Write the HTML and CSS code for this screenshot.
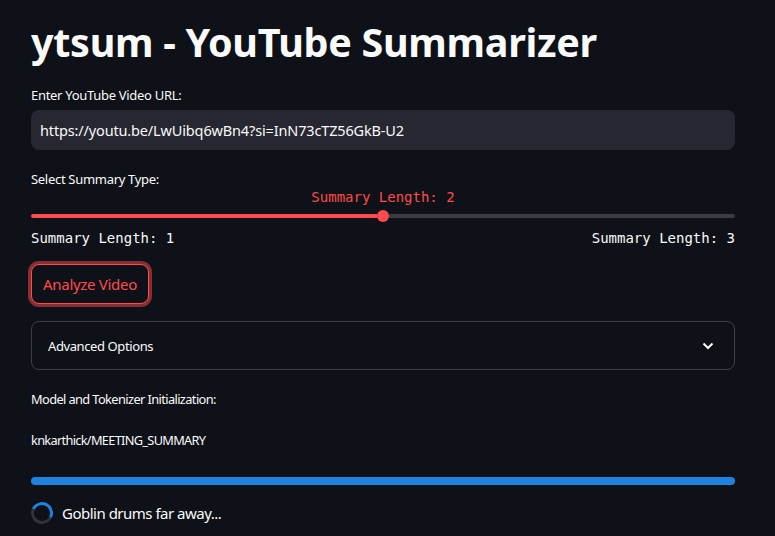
FILE: index.html
```html
<!DOCTYPE html>
<html>
<head>
<meta charset="utf-8">
<link rel="stylesheet" href="styles.css">
</head>
<body>
<main class="main">
  <h1 class="title">ytsum - YouTube Summarizer</h1>

  <div class="field">
    <label class="label">Enter YouTube Video URL:</label>
    <div class="input">https://youtu.be/LwUibq6wBn4?si=InN73cTZ56GkB-U2</div>
  </div>

  <div class="field slider-field">
    <label class="label">Select Summary Type:</label>
    <div class="slider">
      <div class="slider-value"><span>Summary Length: 2</span></div>
      <div class="track">
        <div class="track-fill"></div>
        <div class="thumb"></div>
        <div class="track-rest"></div>
      </div>
      <div class="ticks">
        <span>Summary Length: 1</span>
        <span>Summary Length: 3</span>
      </div>
    </div>
  </div>

  <button class="btn">Analyze Video</button>

  <div class="expander">
    <span>Advanced Options</span>
    <svg class="chev" width="12" height="8" viewBox="0 0 12 8"><path d="M1.5 1.5 L6 6 L10.5 1.5" fill="none" stroke="#fafafa" stroke-width="2"/></svg>
  </div>

  <p class="text t1">Model and Tokenizer Initialization:</p>
  <p class="text t2">knkarthick/MEETING_SUMMARY</p>

  <div class="progress"></div>

  <div class="spinner-row">
    <div class="spinner"></div>
    <span>Goblin drums far away...</span>
  </div>
</main>
</body>
</html>
```

FILE: styles.css
```css
html, body {
  margin: 0;
  padding: 0;
  background: #0e1117;
  color: #fafafa;
  font-family: "Noto Sans", "Open Sans", sans-serif;
}
.main {
  width: 704px;
  padding: 0 0 0 31px;
  display: flex;
  flex-direction: column;
}
.title {
  margin: 0;
  padding: 18px 0 0 0;
  font-size: 39.5px;
  line-height: 48px;
  font-weight: 700;
  letter-spacing: -0.3px;
  height: 49px;
}
.field {
  display: flex;
  flex-direction: column;
}
.label {
  font-size: 13px;
  line-height: 20px;
  height: 20px;
  margin-top: 18px;
  letter-spacing: -0.3px;
}
.input {
  margin-top: 5px;
  height: 40px;
  background: #262730;
  border-radius: 8px;
  font-size: 14.5px;
  line-height: 40px;
  padding-left: 9px;
  letter-spacing: -0.15px;
}
.slider-field .label { margin-top: 19px; }
.slider {
  display: flex;
  flex-direction: column;
}
.slider-value {
  position: relative;
  height: 18px;
  font-family: "DejaVu Sans Mono", monospace;
  font-size: 14px;
  color: #ff4b4b;
}
.slider-value span {
  position: absolute;
  left: 352px;
  transform: translateX(-50%);
  top: 0px;
  white-space: nowrap;
}
.track {
  display: flex;
  align-items: center;
  height: 12px;
  margin-top: 3px;
}
.track-fill {
  width: 346px;
  height: 4px;
  background: #ff4b4b;
  border-radius: 2px 0 0 2px;
}
.thumb {
  width: 12px;
  height: 12px;
  border-radius: 50%;
  background: #ff4b4b;
}
.track-rest {
  flex: 1;
  height: 4px;
  background: #3a3c44;
  border-radius: 0 2px 2px 0;
}
.ticks {
  display: flex;
  justify-content: space-between;
  font-family: "DejaVu Sans Mono", monospace;
  font-size: 14px;
  line-height: 16px;
  margin-top: 8px;
}
.btn {
  align-self: flex-start;
  margin-top: 18px;
  width: 118px;
  height: 40px;
  background: #0e1117;
  border: 1px solid #ff4b4b;
  border-radius: 8px;
  box-shadow: 0 0 0 3px rgba(255, 75, 75, 0.5);
  color: #ff4b4b;
  font-family: "Noto Sans", sans-serif;
  font-size: 15px;
  letter-spacing: -0.3px;
  padding: 0;
}
.expander {
  margin-top: 17px;
  height: 47px;
  border: 1px solid rgba(250, 250, 250, 0.2);
  border-radius: 8px;
  display: flex;
  align-items: center;
  justify-content: space-between;
  padding: 0 20px 0 16px;
  font-size: 13px;
  letter-spacing: -0.4px;
}
.chev { display: block; }
.text {
  margin: 0;
  font-size: 12.8px;
  line-height: 20px;
  letter-spacing: -0.6px;
}
.t1 { margin-top: 19px; }
.t2 { margin-top: 21px; letter-spacing: -0.7px; }
.progress {
  margin-top: 27px;
  height: 8px;
  background: #1c83e1;
  border-radius: 4px;
}
.spinner-row {
  margin-top: 17px;
  display: flex;
  align-items: center;
  gap: 9px;
  font-size: 15px;
  letter-spacing: -0.5px;
}
.spinner {
  width: 16px;
  height: 16px;
  border: 3px solid #31333f;
  border-top-color: #1c83e1;
  border-right-color: #1c83e1;
  border-radius: 50%;
  transform: rotate(-20deg);
}
```
